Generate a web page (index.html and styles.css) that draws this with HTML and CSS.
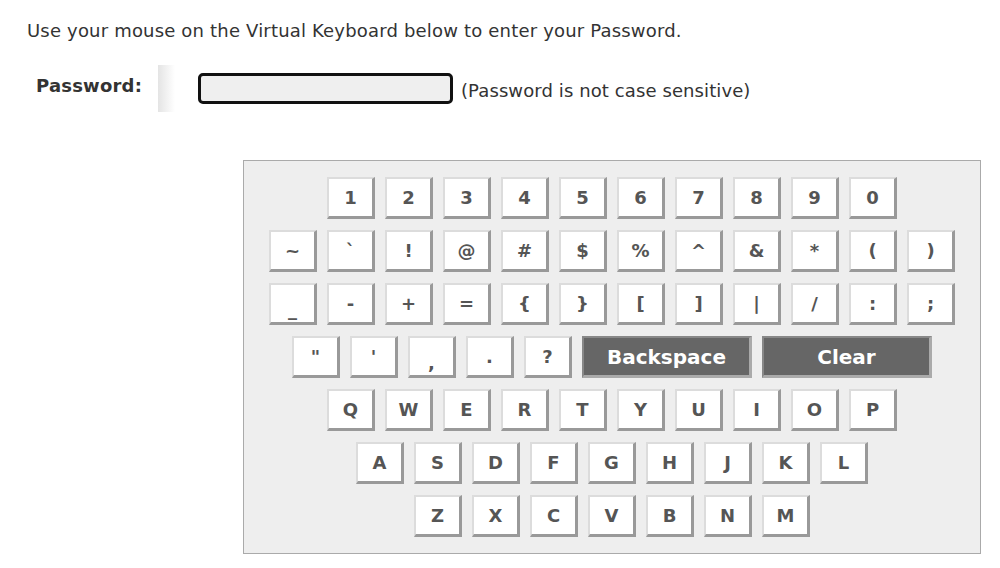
FILE: index.html
```html
<!DOCTYPE html>
<html lang="en">
<head>
<meta charset="UTF-8" />
<title>Virtual Keyboard Login</title>
<link rel="stylesheet" href="styles.css">
</head>
<body>

<p class="intro">Use your mouse on the Virtual Keyboard below to enter your Password.</p>

<div class="pw-row">
  <label class="pw-label" for="pw">Password:</label>
  <span class="divider"></span>
  <input class="pw-input" id="pw" type="password" readonly />
  <span class="pw-note">(Password is not case sensitive)</span>
</div>

<div class="keyboard" id="keyboard">
  <div class="row">
    <button class="key">1</button><button class="key">2</button><button class="key">3</button><button class="key">4</button><button class="key">5</button>
    <button class="key">6</button><button class="key">7</button><button class="key">8</button><button class="key">9</button><button class="key">0</button>
  </div>
  <div class="row">
    <button class="key">~</button><button class="key">`</button><button class="key">!</button><button class="key">@</button><button class="key">#</button><button class="key">$</button>
    <button class="key">%</button><button class="key">^</button><button class="key">&amp;</button><button class="key">*</button><button class="key">(</button><button class="key">)</button>
  </div>
  <div class="row">
    <button class="key low">_</button><button class="key">-</button><button class="key">+</button><button class="key">=</button><button class="key">{</button><button class="key">}</button>
    <button class="key">[</button><button class="key">]</button><button class="key">|</button><button class="key">/</button><button class="key">:</button><button class="key">;</button>
  </div>
  <div class="row">
    <button class="key">"</button><button class="key">'</button><button class="key low">,</button><button class="key">.</button><button class="key">?</button>
    <button class="key special" data-action="back">Backspace</button><button class="key special" data-action="clear">Clear</button>
  </div>
  <div class="row">
    <button class="key">Q</button><button class="key">W</button><button class="key">E</button><button class="key">R</button><button class="key">T</button>
    <button class="key">Y</button><button class="key">U</button><button class="key">I</button><button class="key">O</button><button class="key">P</button>
  </div>
  <div class="row">
    <button class="key">A</button><button class="key">S</button><button class="key">D</button><button class="key">F</button><button class="key">G</button>
    <button class="key">H</button><button class="key">J</button><button class="key">K</button><button class="key">L</button>
  </div>
  <div class="row">
    <button class="key">Z</button><button class="key">X</button><button class="key">C</button><button class="key">V</button>
    <button class="key">B</button><button class="key">N</button><button class="key">M</button>
  </div>
</div>

<script>
  // Virtual keyboard: append / remove characters in the password field
  const field = document.getElementById('pw');

  document.getElementById('keyboard').addEventListener('click', function (e) {
    const key = e.target.closest('.key');
    if (!key) return;
    const action = key.dataset.action;
    if (action === 'back') {
      field.value = field.value.slice(0, -1);
    } else if (action === 'clear') {
      field.value = '';
    } else {
      field.value += key.textContent;
    }
  });
</script>

</body>
</html>
```

FILE: styles.css
```css
body { font-family: "DejaVu Sans", Verdana, sans-serif; color: #333; margin: 0; padding: 0; background: #fff; }
.intro { margin: 0; padding: 20px 0 0 27px; font-size: 18px; letter-spacing: 0.18px; }
.pw-row { display: flex; align-items: center; margin-top: 24px; padding-left: 36px; height: 47px; }
.pw-label { font-weight: bold; font-size: 18px; letter-spacing: 0.2px; width: 122px; margin-top: -7px; }
.divider { width: 17px; height: 47px; background: linear-gradient(to right, #e4e4e4, #fff); }
.pw-input {
  width: 255px; height: 31px; box-sizing: border-box; margin-left: 23px;
  border: 3px solid #111; border-radius: 5px; background: #efefef; outline: none;
}
.pw-note { font-size: 18px; letter-spacing: 0.1px; margin-left: 8px; margin-top: 4px; }

.keyboard {
  width: 738px; box-sizing: border-box; margin: 48px 0 0 243px;
  background: #eee; border: 1px solid #aaa; padding: 16px 0;
  display: flex; flex-direction: column; gap: 11px;
}
.row { display: flex; justify-content: center; gap: 10px; }
.key {
  width: 48px; height: 42px; padding: 0; box-sizing: border-box;
  background: #fff; color: #555; font-family: "DejaVu Sans", Verdana, sans-serif;
  font-weight: bold; font-size: 18px; cursor: pointer;
  border-style: solid; border-width: 2px 3px 3px 2px;
  border-color: #dcdcdc #999 #999 #dcdcdc;
}
.key.low { padding-top: 12px; }
.key.special { width: 170px; background: #666; color: #fff; font-size: 20px; border-color: #888 #aaa #aaa #888; }
.key:hover { background: #f4f4f4; }
.key.special:hover { background: #555; }
```
